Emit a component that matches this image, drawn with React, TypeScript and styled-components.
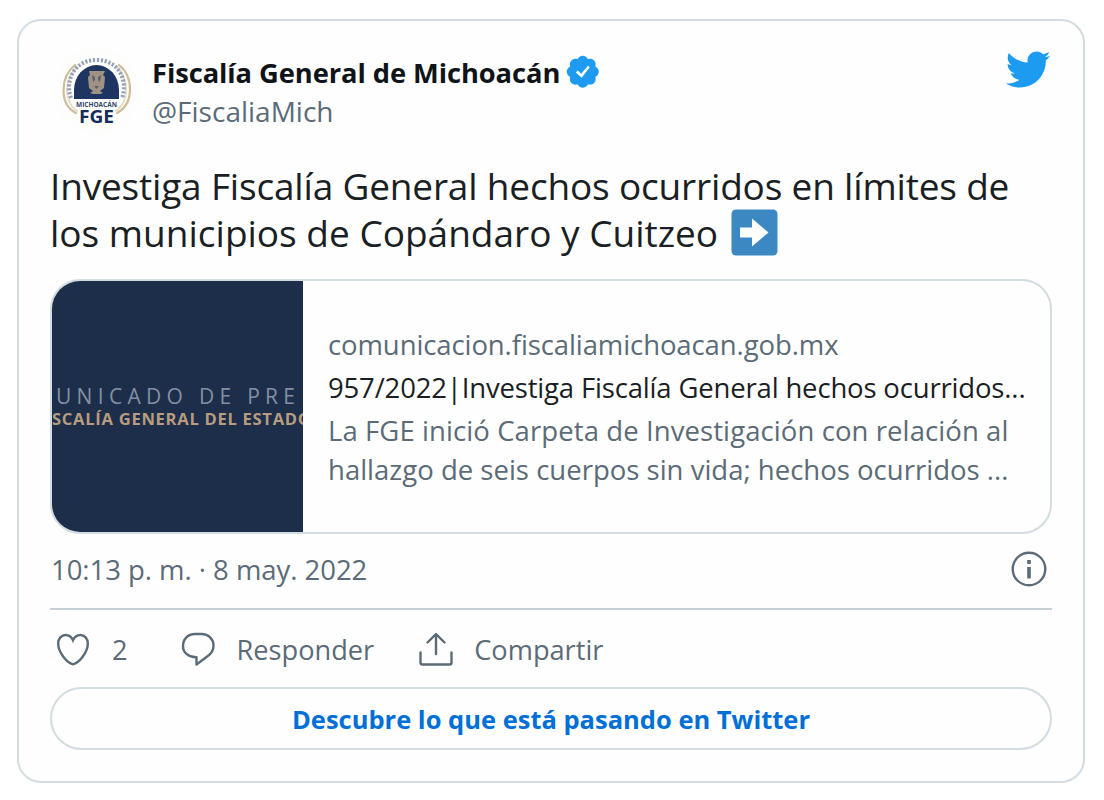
import React from "react";
import styled, { createGlobalStyle } from "styled-components";

const ink = "#1a1f24";
const muted = "#5b6b77";
const line = "#d3dce0";

const GlobalStyle = createGlobalStyle`
  *, *::before, *::after { box-sizing: border-box; }
  body {
    margin: 0;
    background: #fff;
    color: ${ink};
    font-family: "Open Sans", "Noto Sans", sans-serif;
  }
`;

const Page = styled.main`
  height: 800px;
  padding: 19px 19px 0 17px;
  overflow: hidden;
`;

const Card = styled.article`
  display: flex;
  flex-direction: column;
  height: 764px;
  padding: 27px 31px 0;
  border: 2px solid ${line};
  border-radius: 24px;
  background: #fefefe;
`;

const Header = styled.header`
  display: flex;
  height: 88px;
`;

const Avatar = styled.svg`
  flex: none;
  width: 92px;
  height: 88px;
`;

const Names = styled.div`
  flex: 1;
  padding: 5px 0 0 10px;
  line-height: 39px;
  white-space: nowrap;
`;

const DisplayName = styled.div`
  display: flex;
  align-items: center;
  height: 39px;
  font-size: 27.3px;
  font-weight: 700;
  letter-spacing: -0.07px;
  color: #0f1419;
`;

const VerifiedBadge = styled.svg`
  width: 37.5px;
  height: 37.5px;
  margin: -1px 0 0 4px;
  fill: #1d9bf0;
`;

const Handle = styled.div`
  font-size: 28px;
  color: ${muted};
`;

const Bird = styled.svg`
  width: 47px;
  height: 47px;
  margin: -2px 1px 0 0;
  fill: #1d9bf0;
`;

const Message = styled.p`
  margin: 26px 0 0;
  font-size: 37px;
  line-height: 47px;
`;

const Line = styled.span<{ $track?: number }>`
  display: flex;
  align-items: center;
  height: 1lh;
  white-space: nowrap;
  letter-spacing: ${(p) => p.$track ?? 0}px;
`;

const ArrowEmoji = styled.svg`
  width: 47px;
  height: 47px;
  margin-left: 13px;
`;

const LinkCard = styled.section`
  display: flex;
  height: 255px;
  margin-top: 23px;
  border: 2px solid ${line};
  border-radius: 30px;
  overflow: hidden;
`;

const Thumbnail = styled.div`
  display: flex;
  flex-direction: column;
  flex: none;
  width: 251px;
  padding-top: 102px;
  overflow: hidden;
  background: #1c2e4a;
  white-space: nowrap;
`;

const ThumbTitle = styled.div`
  padding-left: 4px;
  font-size: 21px;
  line-height: 27px;
  letter-spacing: 5.3px;
  color: #8390a3;
`;

const ThumbSubtitle = styled.div`
  font-size: 16.6px;
  font-weight: 700;
  line-height: 18px;
  letter-spacing: 0.7px;
  color: #b79c80;
`;

const LinkText = styled.div`
  display: flex;
  flex-direction: column;
  justify-content: center;
  padding: 0 0 2px 25px;
  font-size: 27.5px;
  color: ${muted};
`;

const LinkRow = styled.div`
  line-height: 43px;
`;

const LinkTitle = styled(LinkRow)`
  color: ${ink};
`;

const Summary = styled.div`
  margin-top: 2px;
  line-height: 39px;
`;

const Meta = styled.div`
  display: flex;
  justify-content: space-between;
  height: 74px;
  padding: 18px 4px 0 1px;
  font-size: 27.5px;
  line-height: 36px;
  letter-spacing: -0.04px;
  color: ${muted};
`;

const Divider = styled.hr`
  width: 100%;
  height: 2px;
  margin: 0;
  border: 0;
  background: #c6d1d6;
`;

const Actions = styled.div`
  display: flex;
  align-items: center;
  height: 77px;
  padding: 1px 0 0 4px;
  font-size: 27.200px;
  color: ${muted};
`;

const Action = styled.div<{ $gap: number; $after: number }>`
  display: flex;
  align-items: center;
  gap: ${(p) => p.$gap}px;
  margin-right: ${(p) => p.$after}px;
`;

const Icon = styled.svg`
  display: block;
  width: 38px;
  height: 38px;
  fill: none;
  stroke: ${muted};
  stroke-width: 2.4;
`;

const InfoIcon = styled(Icon)`
  margin-top: -2px;
`;

const DiscoverButton = styled.button`
  height: 63px;
  padding: 0;
  border: 2px solid ${line};
  border-radius: 32px;
  background: transparent;
  color: #006fd6;
  font: 700 25.5px "Open Sans", "Noto Sans", sans-serif;
`;

function Seal() {
  return (
    <Avatar viewBox="50 48 92 88" aria-hidden="true">
      <circle cx="96.5" cy="91" r="43" fill="#fdfdfc" />
      <g fill="none" strokeLinecap="round">
        <path d="M76 113C59 104 60 77 75 65M117 113c17-9 17-36 2-48" stroke="#cdbd9c" strokeWidth="2.2" />
        <path d="M77 111C64 102 63 80 78 66M116 111c13-9 14-31 0-45" stroke="#e4dcc9" strokeWidth="2" strokeDasharray="2 2" />
        <path d="M71 98C65 82 73 60 96.5 60c23.500 0 31.500 22 25.500 38" stroke="#97a2b5" strokeWidth="4" strokeDasharray="2.2 1.7" strokeLinecap="butt" />
      </g>
      <path d="M74 99V90a22.500 25 0 0 1 45 0v9z" fill="#1d3560" />
      <g fill="#a09384">
        <path d="M89 71h16l-2 4 2 2-1 11-4 3 3 2-3 1h-7l-3-1 3-2-4-3-1-11 2-2z" />
        <path d="M92 75l3 2v3l-2 2zM101 75l-3 2v3l2 2zM94 86h5l-2.500 3z" fill="#5d5f6e" />
      </g>
      <text x="96.5" y="107" textAnchor="middle" textLength="41" lengthAdjust="spacingAndGlyphs" fontSize="6.5" fontWeight="700" fill="#35466a">
        MICHOACÁN
      </text>
      <text x="96.5" y="123" textAnchor="middle" textLength="35" lengthAdjust="spacingAndGlyphs" fontSize="18" fontWeight="700" fill="#142c57">
        FGE
      </text>
    </Avatar>
  );
}

export default function App() {
  return (
    <>
      <GlobalStyle />
      <Page>
        <Card>
          <Header>
            <Seal />
            <Names>
              <DisplayName>
                Fiscalía General de Michoacán
                <VerifiedBadge viewBox="0 0 24 24">
                  <path d="M22.25 12c0-1.43-.88-2.67-2.19-3.34.46-1.39.2-2.9-.81-3.91s-2.52-1.27-3.91-.81c-.66-1.31-1.91-2.19-3.34-2.19s-2.67.88-3.33 2.19c-1.4-.46-2.91-.2-3.92.81s-1.26 2.52-.8 3.91c-1.31.67-2.2 1.91-2.2 3.34s.89 2.67 2.2 3.34c-.46 1.39-.21 2.9.8 3.91s2.52 1.26 3.91.81c.67 1.31 1.91 2.19 3.34 2.19s2.68-.88 3.34-2.19c1.39.45 2.9.2 3.91-.81s1.27-2.52.81-3.91c1.31-.67 2.19-1.91 2.19-3.34z" />
                  <path d="M11.25 15.9L7.6 12.5l1.2-1.3 2.2 2 4.3-5.1 1.2 1z" fill="#fff" />
                </VerifiedBadge>
              </DisplayName>
              <Handle>@FiscaliaMich</Handle>
            </Names>
            <Bird viewBox="0 0 24 24">
              <path d="M23.643 4.937c-.835.37-1.732.62-2.675.733.962-.576 1.7-1.49 2.048-2.578-.9.534-1.897.922-2.958 1.13-.85-.904-2.06-1.47-3.4-1.47-2.572 0-4.658 2.086-4.658 4.66 0 .364.042.718.12 1.06-3.873-.195-7.304-2.05-9.602-4.868-.4.69-.63 1.49-.63 2.342 0 1.616.823 3.043 2.072 3.878-.764-.025-1.482-.234-2.11-.583v.06c0 2.257 1.605 4.14 3.737 4.568-.392.106-.803.162-1.227.162-.3 0-.593-.028-.877-.082.593 1.85 2.313 3.198 4.352 3.234-1.595 1.25-3.604 1.995-5.786 1.995-.376 0-.747-.022-1.112-.065 2.062 1.323 4.51 2.093 7.14 2.093 8.57 0 13.255-7.098 13.255-13.254 0-.2-.005-.402-.014-.602.91-.658 1.7-1.477 2.323-2.41z" />
            </Bird>
          </Header>

          <Message>
            <Line $track={-0.18}>Investiga Fiscalía General hechos ocurridos en límites de</Line>
            <Line $track={0}>
              los municipios de Copándaro y Cuitzeo
              <ArrowEmoji viewBox="0 0 47 47">
                <rect x="0.5" y="0.5" width="46" height="46" rx="4.5" fill="#3b88c3" />
                <path d="M9 18.500h12V9.500L37.500 23.500 21 37.500v-9H9z" fill="#fff" />
              </ArrowEmoji>
            </Line>
          </Message>

          <LinkCard>
            <Thumbnail>
              <ThumbTitle>UNICADO DE PRE</ThumbTitle>
              <ThumbSubtitle>SCALÍA GENERAL DEL ESTADO</ThumbSubtitle>
            </Thumbnail>
            <LinkText>
              <LinkRow>
                <Line $track={-0.1}>comunicacion.fiscaliamichoacan.gob.mx</Line>
              </LinkRow>
              <LinkTitle>
                <Line $track={-0.17}>957/2022|Investiga Fiscalía General hechos ocurridos...</Line>
              </LinkTitle>
              <Summary>
                <Line $track={0.09}>La FGE inició Carpeta de Investigación con relación al</Line>
                <Line $track={0.01}>hallazgo de seis cuerpos sin vida; hechos ocurridos ...</Line>
              </Summary>
            </LinkText>
          </LinkCard>

          <Meta>
            <span>10:13 p. m. · 8 may. 2022</span>
            <InfoIcon viewBox="0 0 38 38">
              <circle cx="19" cy="19" r="16.3" />
              <path d="M19 17v11.500M19 10v4" strokeWidth="3.6" />
            </InfoIcon>
          </Meta>
          <Divider />
          <Actions>
            <Action $gap={20} $after={51}>
              <Icon viewBox="0 0 38 38">
                <path d="M19 34.300C13 33 4.200 22.500 4.200 13.500c0-5 3.300-8.500 7.400-8.500 3.300 0 6 2 7.400 5.300C20.400 7 23.100 5 26.400 5c4.100 0 7.400 3.500 7.400 8.500 0 9-8.800 19.500-14.800 20.800z" />
              </Icon>
              2
            </Action>
            <Action $gap={20} $after={43}>
              <Icon viewBox="0 0 38 38">
                <path d="M17.500 34.500v-7.200C9.500 27.500 4 22.500 4 16.200 4 9 9 4 16 4h6.500C29.500 4 34.500 9 34.500 15.500c0 4.500-2.200 8.300-6 10.800z" strokeLinejoin="round" />
              </Icon>
              Responder
            </Action>
            <Action $gap={19} $after={0}>
              <Icon viewBox="0 0 38 38" strokeLinecap="round" strokeLinejoin="round">
                <path d="M3.500 22.500v10q0 2 2 2h27q2 0 2-2v-10M19 24V4.500M10.500 12.500L19 4l8.500 8.500" />
              </Icon>
              Compartir
            </Action>
          </Actions>
          <DiscoverButton>Descubre lo que está pasando en Twitter</DiscoverButton>
        </Card>
      </Page>
    </>
  );
}
